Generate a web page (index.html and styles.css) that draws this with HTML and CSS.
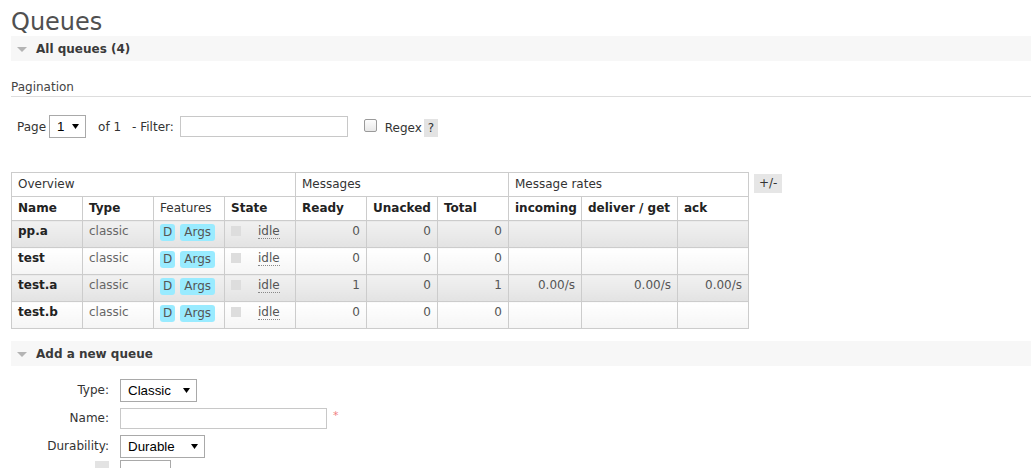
FILE: index.html
```html
<!DOCTYPE html>
<html>
<head>
<meta charset="utf-8">
<link rel="stylesheet" href="styles.css">
</head>
<body>
<div class="page">
  <h1 class="title">Queues</h1>
  <div class="bar"><span class="tri"></span><span class="bar-label">All queues (4)</span></div>

  <h3 class="sub">Pagination</h3>
  <div class="pager">
    <span class="lbl-page">Page</span>
    <span class="select sel-page"><span>1</span><svg class="caret" width="7" height="5" viewBox="0 0 7 5"><path d="M0 0H7L3.5 5Z" fill="#000"/></svg></span>
    <span class="of">of 1</span>
    <span class="filter">- Filter:</span>
    <span class="input filter-input"></span>
    <span class="checkbox"></span>
    <span class="regex">Regex</span>
    <span class="help">?</span>
  </div>

  <div class="table-wrap">
    <table class="list">
      <colgroup>
        <col class="w71"><col class="w71"><col class="w71"><col class="w71">
        <col class="w71"><col class="w71"><col class="w71">
        <col class="w73"><col class="w96"><col class="w71">
      </colgroup>
      <thead>
        <tr class="group">
          <th colspan="4">Overview</th>
          <th colspan="3">Messages</th>
          <th colspan="3">Message rates</th>
        </tr>
        <tr class="head">
          <th>Name</th><th>Type</th><th class="plain">Features</th><th>State</th>
          <th>Ready</th><th>Unacked</th><th>Total</th>
          <th>incoming</th><th>deliver / get</th><th>ack</th>
        </tr>
      </thead>
      <tbody>
        <tr class="alt1">
          <td class="name">pp.a</td><td class="muted">classic</td>
          <td><span class="badge d">D</span><span class="badge">Args</span></td>
          <td><span class="key"></span><span class="idle">idle</span></td>
          <td class="num">0</td><td class="num">0</td><td class="num">0</td>
          <td class="num"></td><td class="num"></td><td class="num"></td>
        </tr>
        <tr class="alt2">
          <td class="name">test</td><td class="muted">classic</td>
          <td><span class="badge d">D</span><span class="badge">Args</span></td>
          <td><span class="key"></span><span class="idle">idle</span></td>
          <td class="num">0</td><td class="num">0</td><td class="num">0</td>
          <td class="num"></td><td class="num"></td><td class="num"></td>
        </tr>
        <tr class="alt1">
          <td class="name">test.a</td><td class="muted">classic</td>
          <td><span class="badge d">D</span><span class="badge">Args</span></td>
          <td><span class="key"></span><span class="idle">idle</span></td>
          <td class="num">1</td><td class="num">0</td><td class="num">1</td>
          <td class="num">0.00/s</td><td class="num">0.00/s</td><td class="num">0.00/s</td>
        </tr>
        <tr class="alt2">
          <td class="name">test.b</td><td class="muted">classic</td>
          <td><span class="badge d">D</span><span class="badge">Args</span></td>
          <td><span class="key"></span><span class="idle">idle</span></td>
          <td class="num">0</td><td class="num">0</td><td class="num">0</td>
          <td class="num"></td><td class="num"></td><td class="num"></td>
        </tr>
      </tbody>
    </table>
    <span class="toggle">+/-</span>
  </div>

  <div class="bar bar2"><span class="tri"></span><span class="bar-label">Add a new queue</span></div>

  <div class="form">
    <label class="flabel">Type:</label>
    <div class="fctl"><span class="select sel-type"><span>Classic</span><svg class="caret" width="7" height="5" viewBox="0 0 7 5"><path d="M0 0H7L3.5 5Z" fill="#000"/></svg></span></div>

    <label class="flabel">Name:</label>
    <div class="fctl"><span class="input name-input"></span><span class="req">*</span></div>

    <label class="flabel">Durability:</label>
    <div class="fctl"><span class="select sel-dur"><span>Durable</span><svg class="caret" width="7" height="5" viewBox="0 0 7 5"><path d="M0 0H7L3.5 5Z" fill="#000"/></svg></span></div>

    <div class="flabel flabel-last"><span class="help-box"></span></div>
    <div class="fctl fctl-last"><span class="select sel-auto"></span></div>
  </div>
</div>
</body>
</html>
```

FILE: styles.css
```css
html, body {
  margin: 0;
  padding: 0;
  background: #fff;
}
body {
  font-family: "DejaVu Sans", Verdana, sans-serif;
  font-size: 12px;
  color: #444;
}
.page {
  padding-left: 11px;
}
.title {
  margin: 8px 0 0;
  font-size: 24px;
  line-height: 28px;
  font-weight: normal;
  color: #505050;
}
.bar {
  height: 25px;
  background: #f7f7f7;
  display: flex;
  align-items: center;
  padding-left: 6px;
}
.tri {
  width: 0;
  height: 0;
  border-left: 5px solid transparent;
  border-right: 5px solid transparent;
  border-top: 5px solid #b4b4b4;
  margin-right: 9px;
  margin-top: 1px;
}
.bar-label {
  font-weight: bold;
  color: #3a3a3a;
  line-height: 15px;
  margin-top: 1px;
}
.sub {
  margin: 19px 0 0;
  font-size: 12px;
  font-weight: normal;
  line-height: 15px;
  padding-bottom: 1px;
  border-bottom: 1px solid #ddd;
  color: #444;
}
.pager {
  display: flex;
  align-items: center;
  margin-top: 18px;
  padding-left: 6px;
  height: 23px;
  color: #333;
}
.select {
  display: inline-flex;
  align-items: center;
  justify-content: space-between;
  box-sizing: border-box;
  height: 23px;
  border: 1px solid #a9a9a9;
  background: #fff;
  padding: 0 6px 0 7px;
  font-family: "Liberation Sans", Arial, sans-serif;
  font-size: 13.33px;
  color: #000;
}
.caret {
  display: block;
}
.sel-page { width: 37px; margin-left: 3px; }
.sel-type { width: 77px; }
.sel-dur { width: 85px; }
.sel-auto { width: 51px; }
.of { margin-left: 12px; }
.filter { margin-left: 11px; }
.input {
  display: inline-block;
  box-sizing: border-box;
  height: 21px;
  border: 1px solid #c8c8c8;
  background: #fff;
}
.filter-input { width: 168px; margin-left: 6px; }
.checkbox {
  display: inline-block;
  box-sizing: border-box;
  width: 13px;
  height: 13px;
  border: 1px solid #9a9a9a;
  border-radius: 2px;
  background: linear-gradient(#fdfdfd, #e8e8e8);
  margin-left: 16px;
  margin-top: -2px;
}
.regex { margin-left: 8px; margin-top: 3px; }
.help {
  display: inline-flex;
  align-items: center;
  justify-content: center;
  width: 14px;
  height: 18px;
  background: #e3e3e3;
  color: #333;
  margin-left: 2px;
  margin-top: 2px;
}
.table-wrap {
  display: flex;
  align-items: flex-start;
  margin-top: 34px;
}
.list {
  border-collapse: collapse;
  table-layout: fixed;
  width: 738px;
  border: 1px solid #ccc;
}
.w71 { width: 71px; }
.w73 { width: 73px; }
.w96 { width: 96px; }
.list th, .list td {
  border: 1px solid #ccc;
  padding: 4px 6px;
  line-height: 15px;
  text-align: left;
  white-space: nowrap;
  overflow: hidden;
}
.list th {
  height: 15px;
  color: #222;
}
.list tr.group th {
  font-weight: normal;
  color: #333;
}
.list th.plain {
  font-weight: normal;
  color: #333;
}
.list td {
  padding: 3px 6px 0;
  height: 23px;
  vertical-align: top;
  color: #555;
}
.list tr.alt1 td {
  background: linear-gradient(#f1f1f1, #e3e3e3);
}
.list tr.alt2 td {
  background: linear-gradient(#ffffff, #f5f5f5);
}
.list td.name {
  font-weight: bold;
  color: #222;
}
.list td.muted { color: #666; }
.list td.num { text-align: right; }
.badge {
  display: inline-block;
  vertical-align: top;
  line-height: 15px;
  padding: 1px 4px;
  margin-right: 5px;
  background: #99ebff;
  border-radius: 3px;
  color: #555;
}
.badge.d { padding: 1px 3px; }
.key {
  display: inline-block;
  vertical-align: top;
  width: 10px;
  height: 10px;
  margin-top: 2px;
  margin-right: 17px;
  background: #dddddd;
}
.idle {
  border-bottom: 1px dotted #888;
  color: #555;
}
.toggle {
  margin-left: 5px;
  margin-top: 2px;
  background: #e6e6e6;
  color: #333;
  padding: 0 5px;
  line-height: 19px;
  height: 19px;
}
.bar2 {
  margin-top: 12px;
}
.form {
  display: grid;
  grid-template-columns: 98px auto;
  column-gap: 11px;
  grid-auto-rows: 28px;
  margin-top: 10px;
  align-items: center;
}
.flabel {
  text-align: right;
  color: #333;
  white-space: nowrap;
}
.fctl {
  display: flex;
  align-items: center;
}
.name-input { width: 207px; }
.req {
  color: #f08080;
  margin-left: 6px;
  margin-top: -6px;
  font-size: 11px;
}
.flabel-last {
  align-self: start;
  padding-top: 1px;
  display: flex;
  justify-content: flex-end;
}
.fctl-last {
  align-self: start;
}
.help-box {
  display: block;
  width: 14px;
  height: 18px;
  background: #e3e3e3;
}
```
